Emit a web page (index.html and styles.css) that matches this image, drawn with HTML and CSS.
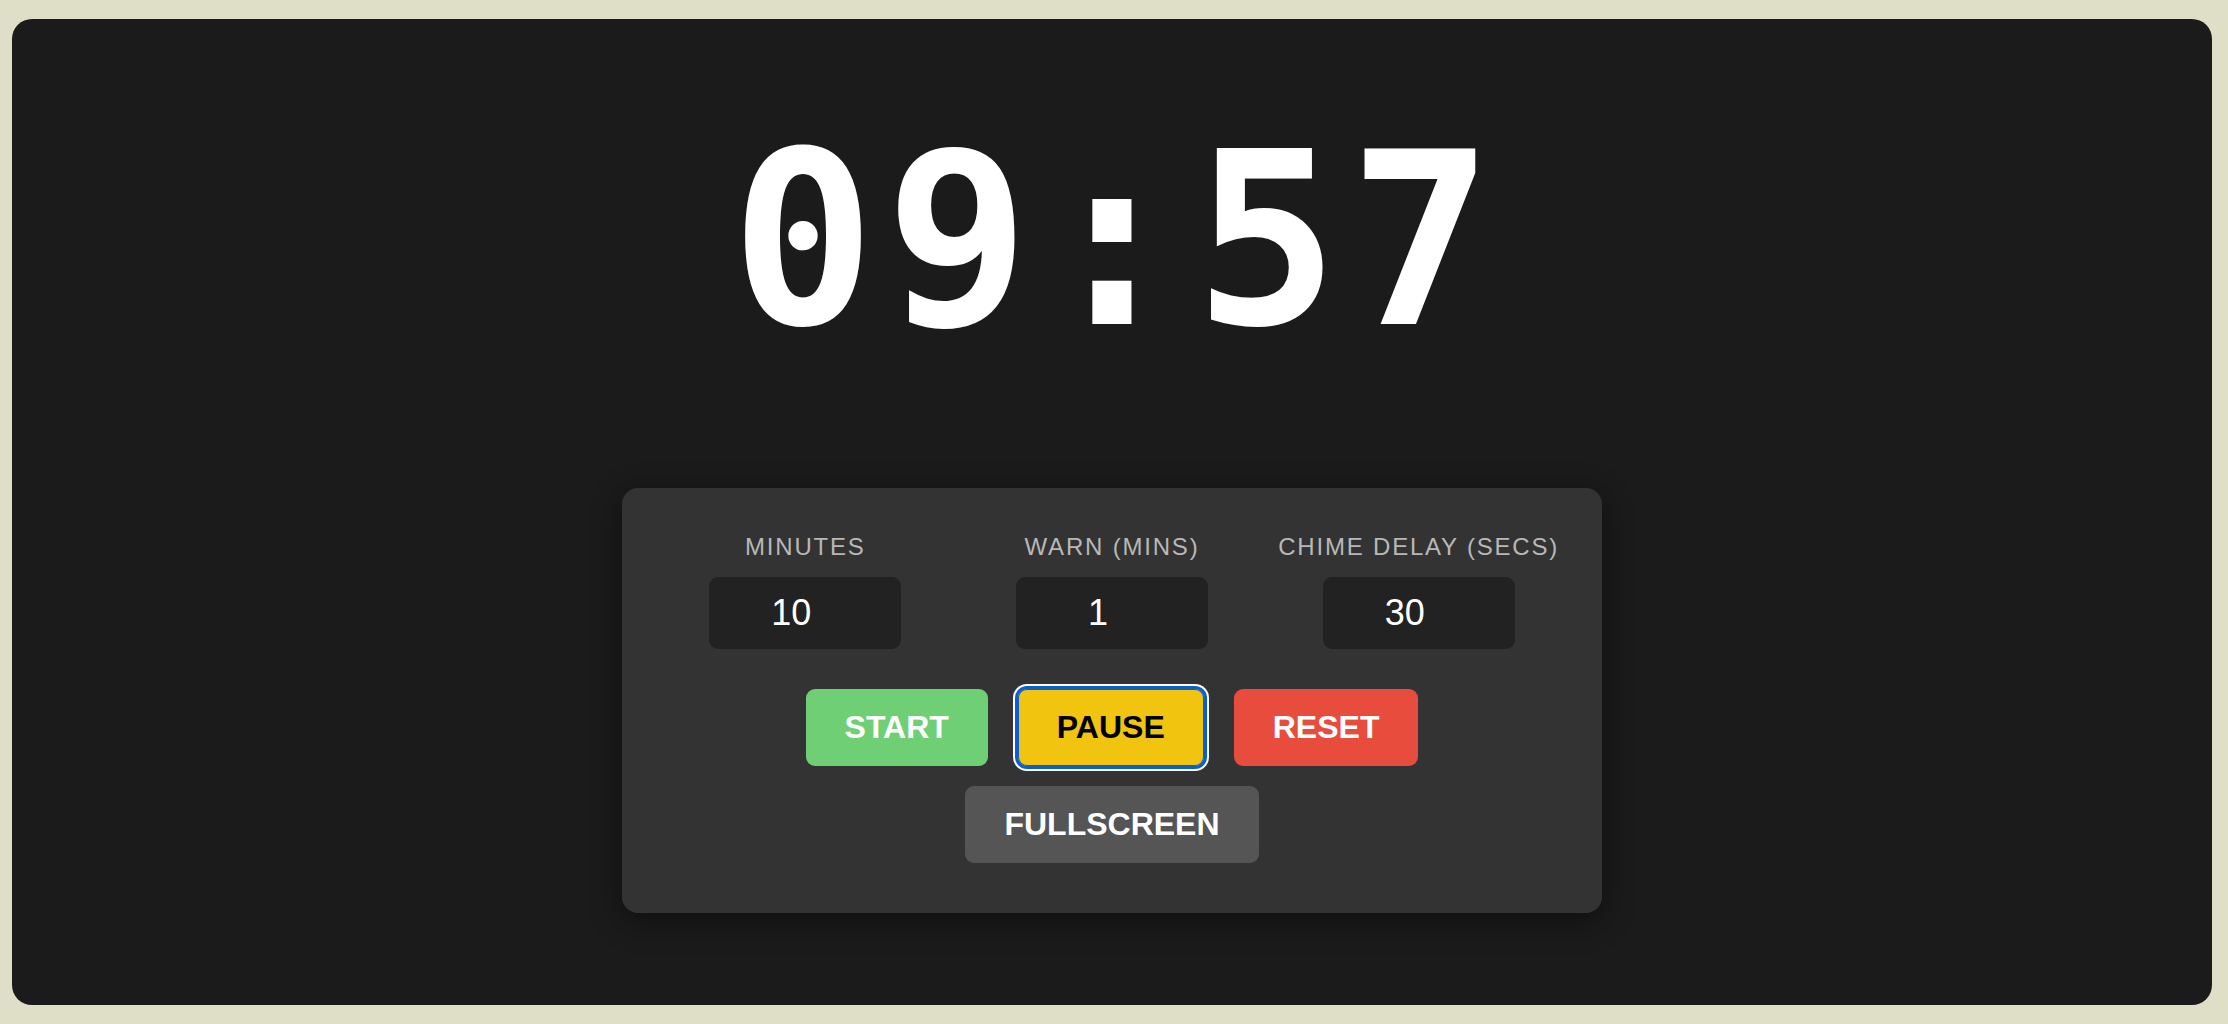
FILE: index.html
```html
<!DOCTYPE html>
<html lang="en">
<head>
<meta charset="utf-8">
<title>Timer</title>
<link rel="stylesheet" href="styles.css">
</head>
<body>
<main class="frame">
  <div class="timer">09:57</div>
  <section class="panel">
    <div class="fields">
      <label class="field">
        <span class="label">Minutes</span>
        <input class="num" type="text" value="10">
      </label>
      <label class="field">
        <span class="label">Warn (mins)</span>
        <input class="num" type="text" value="1">
      </label>
      <label class="field">
        <span class="label">Chime delay (secs)</span>
        <input class="num" type="text" value="30">
      </label>
    </div>
    <div class="row">
      <button class="btn btn-start">START</button>
      <button class="btn btn-pause is-focused">PAUSE</button>
      <button class="btn btn-reset">RESET</button>
    </div>
    <div class="row row-second">
      <button class="btn btn-full">FULLSCREEN</button>
    </div>
  </section>
</main>
</body>
</html>
```
FILE: styles.css
```css
html, body {
  margin: 0;
  padding: 0;
}
body {
  background: #dfdfc7;
  padding: 19px 16px 19px 12px;
  font-family: "Liberation Sans", Arial, sans-serif;
}
.frame {
  height: 986px;
  box-sizing: border-box;
  background: #1b1b1b;
  border-radius: 20px;
  display: flex;
  flex-direction: column;
  align-items: center;
}
.timer {
  margin-top: 102px;
  padding-left: 10px;
  font-family: "DejaVu Sans Mono", monospace;
  font-weight: bold;
  font-size: 240px;
  line-height: 240px;
  height: 240px;
  letter-spacing: 10px;
  color: #fff;
}
.panel {
  margin-top: 127px;
  width: 980px;
  box-sizing: border-box;
  padding: 45px 30px 50px;
  background: #333;
  border-radius: 16px;
  box-shadow: 0 8px 32px rgba(0, 0, 0, 0.45);
}
.fields {
  display: grid;
  grid-template-columns: repeat(3, 1fr);
}
.field {
  display: flex;
  flex-direction: column;
  align-items: center;
  gap: 16px;
}
.label {
  font-size: 24px;
  line-height: 27.6px;
  letter-spacing: 1.8px;
  color: #b8b8b8;
  text-transform: uppercase;
}
.num {
  width: 192px;
  height: 72px;
  box-sizing: border-box;
  padding: 0 28px 0 0;
  border: none;
  outline: none;
  border-radius: 9px;
  background: #222;
  color: #fff;
  font-family: "Liberation Sans", Arial, sans-serif;
  font-size: 36px;
  text-align: center;
}
.row {
  margin-top: 40px;
  display: flex;
  justify-content: center;
  gap: 30px;
}
.row-second {
  margin-top: 20px;
}
.btn {
  border: none;
  border-radius: 9px;
  padding: 20px 39px;
  font-family: "Liberation Sans", Arial, sans-serif;
  font-weight: bold;
  font-size: 32px;
  line-height: 37px;
  color: #fff;
  cursor: pointer;
}
.btn-start { background: #6fcf75; }
.btn-pause { background: #f1c40f; color: #000; }
.btn-reset { background: #e74c3c; }
.btn-full { background: #555; }
.is-focused {
  box-shadow: inset 0 0 0 1px #0a5fd0, 0 0 0 3px #0a5fd0, 0 0 0 5px #fff;
}
```
